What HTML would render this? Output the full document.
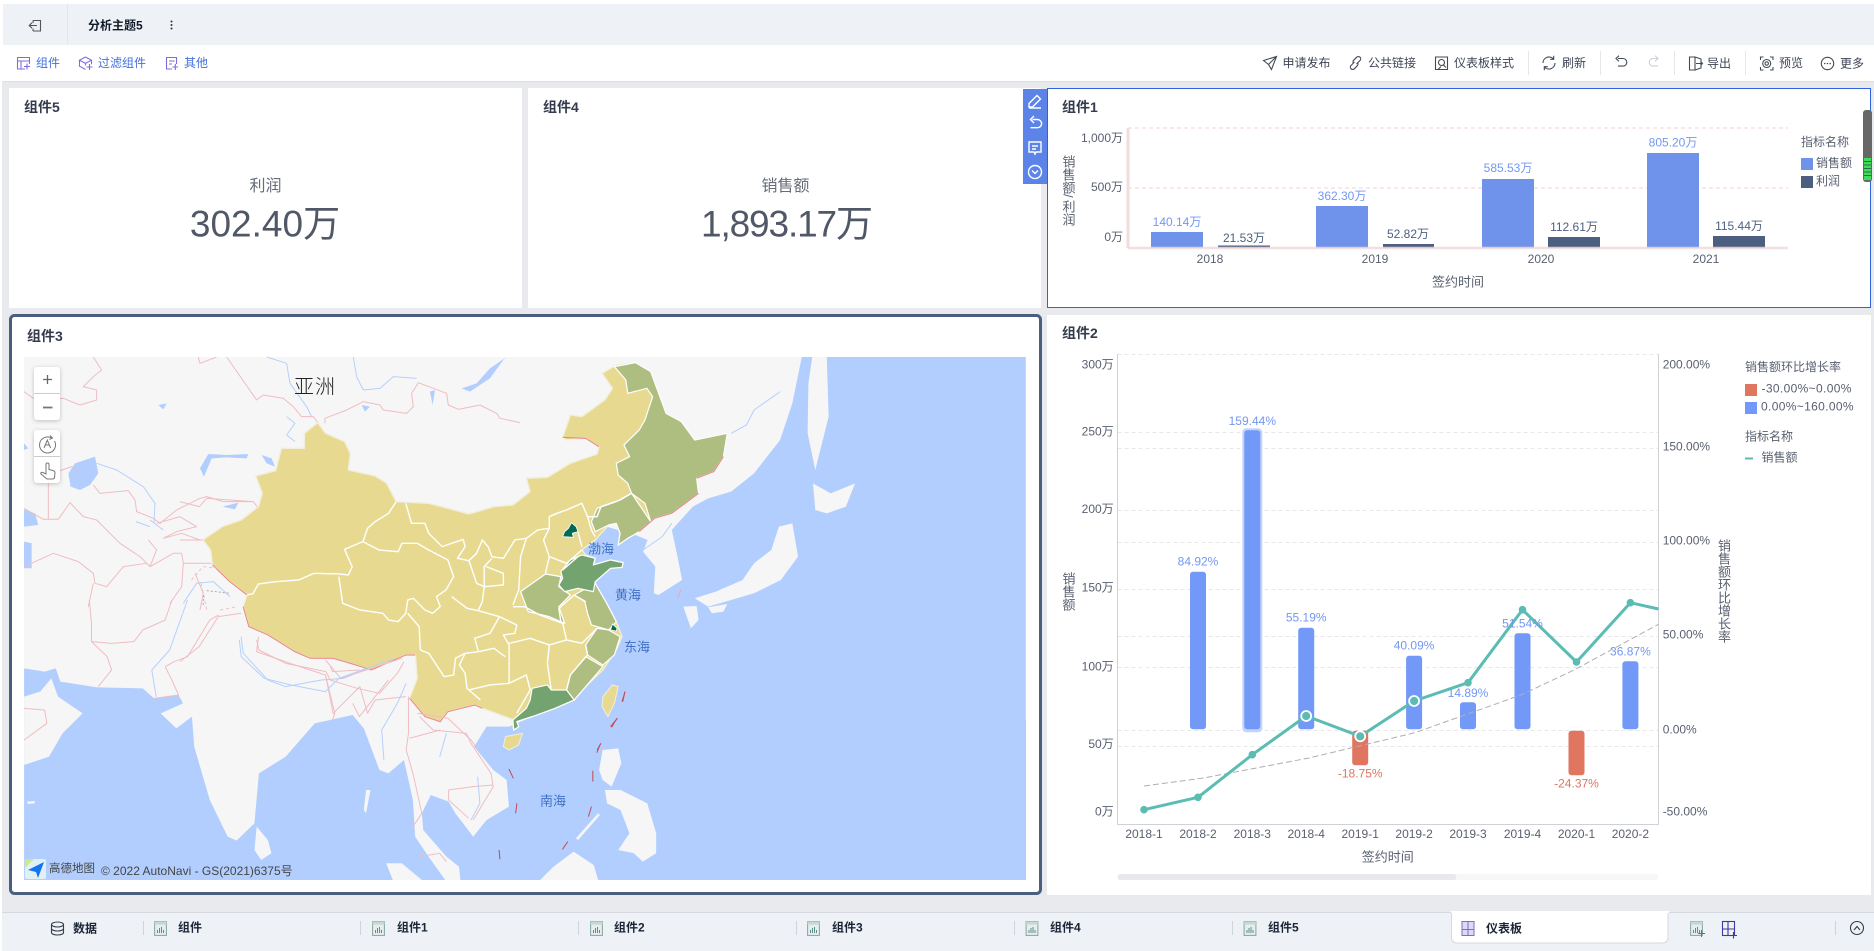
<!DOCTYPE html>
<html lang="zh">
<head>
<meta charset="utf-8">
<title>分析主题5</title>
<style>
html,body{margin:0;padding:0;width:1874px;height:951px;overflow:hidden;background:#fff}
svg{display:block;position:absolute;left:0;top:0}
text{font-family:"Liberation Sans","Noto Sans CJK SC",sans-serif;dominant-baseline:central}
.nss *{vector-effect:non-scaling-stroke}
.t{font-size:12px;fill:#3d4656}
.b{font-size:12px;font-weight:700;fill:#1b2536}
.h{font-size:14px;font-weight:700;fill:#333b4c}
.a{font-size:12px;fill:#596070}
.at{font-size:13px;fill:#596070}
.bl{font-size:12px;fill:#7397f2;text-anchor:middle}
.dk{font-size:12px;fill:#4d5f80;text-anchor:middle}
.rd{font-size:12px;fill:#e07560;text-anchor:middle}
.m{text-anchor:middle}
.e{text-anchor:end}
.tb{font-size:12px;fill:#4470dd}
.v{writing-mode:vertical-rl;text-orientation:upright;font-size:13px;fill:#596070}
.v2{writing-mode:vertical-rl;font-size:13px;fill:#596070}
.ic{fill:none;stroke:#444b58;stroke-width:1.1}
.lb{fill:none;stroke:#7b6fe0;stroke-width:1.1}
.sea{font-size:13px;fill:#3f70c6;text-anchor:middle}
.wht{fill:none;stroke:#fff;stroke-width:1.4;stroke-linejoin:round}
.pk{fill:none;stroke:#f0bcc1;stroke-width:1;stroke-linejoin:round}
.rv{fill:none;stroke:#b6d0fb;stroke-width:1;stroke-linejoin:round}
.ln{fill:#b1cefe}
.rb{fill:none;stroke:#e9838b;stroke-width:1}
.nd{fill:none;stroke:#c8494f;stroke-width:1}
</style>
</head>
<body>
<svg width="1874" height="951" viewBox="0 0 1874 951" xmlns="http://www.w3.org/2000/svg">
<defs>
<clipPath id="mc"><rect x="24" y="357" width="1002" height="523"/></clipPath>
<symbol id="ci" viewBox="0 0 13 15">
<rect x=".6" y=".6" width="11.8" height="13.8" fill="#e6eeed" stroke="#84a5a1"/>
<rect x=".6" y=".6" width="11.8" height="3" fill="#c5d8d5" stroke="none"/>
<path d="M3.5 12V9M5.5 12V7M7.5 12V6M9.5 12V9" stroke="#5d8f8a" fill="none"/>
</symbol>
</defs>

<!-- page background -->
<rect width="1874" height="951" fill="#fff"/>
<rect x="2" y="81" width="1872" height="832" fill="#e8eaee"/>
<rect x="3" y="4" width="1871" height="41" fill="#eef1f6"/>
<rect x="3" y="81" width="1871" height="1" fill="#dcdee3"/>
<rect x="67" y="4" width="1" height="41" fill="#e3e6ec"/>

<!-- tab bar -->
<g class="ic" style="stroke:#555">
<path d="M33 20.5h7.5v10.5h-7.5M33 20.5v2.5M33 28.5v2.5M37 25.5h-7.5M32 22.8l-2.8 2.7 2.8 2.7"/>
</g>
<text x="88" y="25.5" class="b" style="fill:#111a28">分析主题5</text>
<g fill="#333"><circle cx="171.5" cy="21.5" r="1"/><circle cx="171.5" cy="25" r="1"/><circle cx="171.5" cy="28.5" r="1"/></g>

<!-- left toolbar -->
<g class="lb">
<path d="M29.5 64V57.5H17.5V69H25M17.5 61H29.5M21 61V69M24 66.5h6M27 63.5v6"/>
<path d="M85.5 57l6 3.2v4M79.5 60.2v6l6 3.2M85.5 57l-6 3.2 6 3.2 6-3.2M85.5 63.4v2M86.5 67h6M89.5 64v6"/>
<path d="M176.5 64V57.5H166.5V69H172M169 61h5.5M169 64h3M172.5 67h5.5M175.3 64v6"/>
</g>
<text x="36" y="63" class="tb">组件</text>
<text x="98" y="63" class="tb">过滤组件</text>
<text x="184" y="63" class="tb">其他</text>

<!-- right toolbar -->
<g class="ic">
<path d="M1263.5 60.5L1276.5 56.5L1271.5 69.5L1268.5 64.5ZM1268.5 64.5L1276.5 56.5"/>
<path d="M1354.5 62l-3.5 3.5a2.3 2.3 0 0 0 3.3 3.3l3-3a2.3 2.3 0 0 0 0-3.3M1356.5 64l3.5-3.5a2.3 2.3 0 0 0-3.3-3.3l-3 3a2.3 2.3 0 0 0 0 3.3"/>
<path d="M1435.5 69.5V57h12v12.5zM1438 69.5l3-3M1441.5 59.5a3 3 0 1 1 0 6 3 3 0 0 1 0-6M1443.5 65l2.5 2.5"/>
<path d="M1543 63a6 6 0 0 1 10.5-4M1555 63a6 6 0 0 1-10.5 4M1553.7 55.8v3.5h-3.5M1544.3 70.2v-3.5h3.5"/>
<path d="M1618 58.5h5a3.8 3.8 0 0 1 0 7.6h-5M1619 55.7l-3 2.8 3 2.8"/>
<path d="M1658 58.5h-5a3.8 3.8 0 0 0 0 7.6h5M1655 55.7l3 2.8-3 2.8" style="stroke:#ccd1da"/>
<path d="M1695 57h-5.5v13h5.5M1695 57l6 2v9l-6 2zM1696 63.5h6.5M1700.5 61.5l2 2-2 2"/>
<path d="M1760.5 60v-3h3M1773 60v-3h-3M1760.5 67v3h3M1773 67v3h-3M1766.7 59.5a4 4 0 1 1 0 8 4 4 0 0 1 0-8M1766.7 61.8a1.7 1.7 0 1 1 0 3.4 1.7 1.7 0 0 1 0-3.4"/>
<circle cx="1827.5" cy="63.5" r="6.2"/>
</g>
<g fill="#444b58"><circle cx="1824.8" cy="63.5" r=".8"/><circle cx="1827.5" cy="63.5" r=".8"/><circle cx="1830.2" cy="63.5" r=".8"/></g>
<text x="1282.5" y="63" class="t">申请发布</text>
<text x="1368" y="63" class="t">公共链接</text>
<text x="1454" y="63" class="t">仪表板样式</text>
<text x="1562" y="63" class="t">刷新</text>
<text x="1707" y="63.5" class="t">导出</text>
<text x="1779" y="63" class="t">预览</text>
<text x="1840" y="63.5" class="t">更多</text>
<g fill="#e4e6eb"><rect x="1528" y="51" width="1" height="24"/><rect x="1600" y="51" width="1" height="24"/><rect x="1674" y="51" width="1" height="24"/><rect x="1745" y="51" width="1" height="24"/></g>

<!-- cards -->
<rect x="9" y="88" width="513" height="220" fill="#fff"/>
<rect x="528" y="88" width="513" height="220" fill="#fff"/>
<rect x="1047.5" y="88.5" width="823" height="219" fill="#fff" stroke="#2f62dc"/>
<rect x="10.5" y="315.5" width="1030" height="578" rx="4" fill="#fff" stroke="#4a5e80" stroke-width="3"/>
<rect x="1047" y="315" width="824" height="580" fill="#fff"/>

<text x="24" y="107" class="h">组件5</text>
<text x="543" y="107" class="h">组件4</text>
<text x="1062" y="107" class="h">组件1</text>
<text x="27" y="336" class="h">组件3</text>
<text x="1062" y="333" class="h">组件2</text>

<!-- KPI -->
<text x="265.500" y="186.500" class="m" style="font-size:16px;fill:#666c78">利润</text>
<text x="265" y="224" class="m" style="font-size:37px;fill:#505766">302.40万</text>
<text x="785.500" y="186.500" class="m" style="font-size:16px;fill:#666c78">销售额</text>
<text x="787" y="224" class="m" textLength="172" lengthAdjust="spacing" style="font-size:37px;fill:#505766">1,893.17万</text>

<!-- side tool -->
<rect x="1023" y="89" width="24" height="95" fill="#5b83e8"/>
<g fill="none" stroke="#fff" stroke-width="1.4">
<path d="M1029 103.5l8-8 3.5 3.5-8 8h-3.5zM1029 108h12"/>
<path d="M1032.5 119.5h5a4 4 0 0 1 0 8.2h-7M1034 116l-3.5 3.5 3.5 3.5"/>
<path d="M1029 142h12v10h-5l-1 2-1-2h-5zM1032 146h6M1032 149h4"/>
<circle cx="1035" cy="172" r="6.5"/><path d="M1032 170.5l3 3 3-3"/>
</g>

<!-- chart 1 -->
<g>
<path d="M1128 128H1788M1128 188H1788" stroke="#fbe7e6" stroke-width="2" stroke-dasharray="4 3" fill="none"/>
<path d="M1128 128V248" stroke="#f2dcdc" stroke-width="3" fill="none"/>
<g fill="#6f92ea">
<rect x="1151" y="232" width="52" height="16"/><rect x="1316" y="206" width="52" height="42"/><rect x="1482" y="179" width="52" height="69"/><rect x="1647" y="153" width="52" height="95"/>
</g>
<g fill="#4d5f80">
<rect x="1218" y="245.5" width="52" height="2.5"/><rect x="1383" y="244" width="51" height="4"/><rect x="1548" y="237" width="52" height="11"/><rect x="1713" y="236" width="52" height="12"/>
</g>
<path d="M1128 248H1788" stroke="#f1d9d9" stroke-width="2.5" fill="none" opacity=".85"/>
<g class="a">
<text x="1123" y="138" class="e">1,000万</text><text x="1123" y="187" class="e">500万</text><text x="1123" y="237" class="e">0万</text>
<text x="1210" y="259" class="m">2018</text><text x="1375" y="259" class="m">2019</text><text x="1541" y="259" class="m">2020</text><text x="1706" y="259" class="m">2021</text>
</g>
<text x="1177" y="222" class="bl">140.14万</text><text x="1342" y="196" class="bl">362.30万</text><text x="1508" y="168" class="bl">585.53万</text><text x="1673" y="142.5" class="bl">805.20万</text>
<text x="1244" y="238" class="dk">21.53万</text><text x="1408" y="234" class="dk">52.82万</text><text x="1574" y="227" class="dk">112.61万</text><text x="1739" y="226" class="dk">115.44万</text>
<text x="1458" y="282" class="at m">签约时间</text>
<text x="1068" y="155" class="v" style="dominant-baseline:auto">销售额</text>
<text x="1068" y="194" class="v2" style="dominant-baseline:auto">/</text>
<text x="1068" y="200" class="v" style="dominant-baseline:auto">利润</text>
<text x="1801" y="142" class="a">指标名称</text>
<rect x="1801" y="158" width="12" height="12" fill="#6f92ea"/><text x="1816" y="163" class="a">销售额</text>
<rect x="1801" y="176" width="12" height="12" fill="#4d5f80"/><text x="1816" y="181" class="a">利润</text>
</g>

<!-- floating widget -->
<rect x="1863" y="110" width="9" height="72" rx="3" fill="#676767"/>
<rect x="1864" y="158" width="7" height="22" fill="#3fdc5b"/>
<path d="M1864 161.5h7M1864 165h7M1864 168.5h7M1864 172h7M1864 175.5h7" stroke="#2f6b42" fill="none"/>

<!-- map -->
<g clip-path="url(#mc)">
<rect x="24" y="357" width="1002" height="523" fill="#f6f6f7"/>

<!-- seas / lakes, zoom3 coordinates -->
<g class="nss" transform="translate(0,310) scale(.3333)">
<path class="ln" d="M205 490L225 460L285 440L295 490L270 525L240 540L212 530Z"/>
<path class="ln" d="M72 598L105 610L115 645L72 650Z"/>
<path class="ln" d="M72 695L95 700L95 775L72 775Z"/>
<path class="ln" d="M72 400L85 415L72 420Z"/>
<path class="ln" d="M600 475L625 432L680 435L745 432L740 445L680 442L635 445L612 500Z"/>
<path class="ln" d="M1520 141L1470 175L1430 220L1385 235L1410 245L1470 205L1510 150Z"/>
<path class="ln" d="M1085 285L1110 290L1095 305Z"/>
<path class="ln" d="M668 590L715 578L705 598Z"/>
<path class="ln" d="M1290 245L1305 240L1298 285Z"/>
<path class="ln" d="M475 285L500 280L490 298Z"/>
<path class="ln" d="M785 435L815 445L825 470L800 460Z"/>
<path class="rv" d="M290 460L350 480L430 530L465 580L462 640M1060 141L1070 200L1090 240L1140 235L1180 200L1250 205M800 141L860 160L870 220L920 290L935 320M860 320L885 340L860 375L885 395M408 635L450 650M450 630L490 660M550 880L590 820L640 815L690 860"/>
<path class="pk" d="M680 141L770 270L790 255L850 265L880 290L905 320L940 320L955 340M975 340L975 325L1040 300L1090 275L1140 285L1150 300L1220 310L1240 290L1235 250L1255 218L1340 250L1345 285L1375 298L1440 285L1490 310L1500 325L1560 338M72 245L100 265L190 265L240 285L290 270L290 240L250 230L280 200L305 180L280 141M180 482L215 470L235 490M145 520V628M72 595L130 628L175 628L210 578L250 620L290 630L360 700L420 740L450 770L520 730L545 730L550 760L640 760M280 525L300 550L385 542L405 570L410 605L460 625L480 640L530 600L600 565L620 560L670 575L760 575L775 595M72 770L160 730L235 755L280 790L285 820L320 830L370 770L440 760M280 820L265 890M595 141L600 160L650 141M470 640L540 620L590 650L530 665L490 685L545 670L600 690M445 690L470 720L450 770M510 880L545 830L550 760M585 790L610 850L600 900"/>
</g>

<!-- seas zoom5 coords -->
<g class="nss" transform="translate(0,600) scale(.4464,.3333)">
<path class="ln" d="M54 205L100 215L125 205L135 245L218 262L320 265L345 295L400 285L410 310L360 340L395 385L430 350L435 440L470 600L510 710L530 722L570 670L580 520L640 470L705 370L790 345L815 385L850 510L870 520L905 480L925 600L930 710L960 770L1000 845L54 845Z"/>
<path class="ln" d="M1130 380L1090 380L1062 440L1105 510L1135 540L1140 620L1090 660L1060 710L1020 640L1005 605L965 585L945 640L948 690L1000 770L1028 800L1032 845L2300 845L2300 360Z"/>
</g>

<!-- Pacific zoom4 coords -->
<g class="nss" transform="translate(180,350) scale(.3827,.3333)">
<path class="ln" d="M1625 20L1600 160L1568 270L1500 370L1440 425L1380 445L1340 470L1285 540L1300 620L1312 690L1250 735L1238 730L1242 650L1210 605L1222 570L1190 555L1100 525L1040 600L1040 700L1080 720L1100 800L1100 950L1000 1060L860 1130L860 1210L2210 1210L2210 20Z"/>
<path fill="#f6f6f7" d="M1652 20L1690 20L1695 200L1660 360L1640 250L1642 100Z"/>
<path fill="#f6f6f7" d="M1654 400L1700 430L1764 400L1740 470L1690 490L1660 480Z"/>
<path fill="#f6f6f7" d="M1345 745L1400 725L1470 690L1500 640L1545 600L1565 530L1600 520L1615 620L1570 690L1500 730L1440 750L1380 770Z"/>
<path fill="#f6f6f7" d="M1315 770L1350 768L1355 810L1335 835Z"/>
<path fill="#f6f6f7" d="M1380 772L1430 762L1420 785L1390 790Z"/>
<path class="rv" d="M1568 125L1500 180L1480 225L1440 250M1210 600L1260 560L1285 520"/>
</g>

<!-- extra land zoom5 coords -->
<g class="nss" transform="translate(0,600) scale(.4464,.3333)">
<g fill="#f6f6f7">
<path d="M54 495L110 470L140 400L185 340L130 290L115 235L90 275L54 290Z"/>
<path d="M575 680L600 720L608 760L585 780L570 750Z"/>
<path d="M865 790L900 790L945 840L880 840Z"/>
<path d="M1210 840L1240 800L1285 755L1330 795L1340 840Z"/>
<path d="M1350 450L1385 445L1392 490L1370 560L1350 540L1342 510Z"/>
<path d="M1355 570L1390 570L1450 610L1470 700L1470 760L1440 785L1420 760L1385 750L1410 700L1390 630L1360 610Z"/>
<path d="M1290 715L1340 640L1344 645L1295 720Z"/>
<path d="M820 570L830 570L820 640L815 630Z"/>
<path d="M60 605L78 603L78 610L62 612Z"/>
</g>
<path class="rv" d="M540 110L545 160L600 240L640 260L720 240L770 235L860 185M420 0L380 150L340 210L350 290M910 250L890 310L855 390L860 480M1000 400L985 470M1070 530L1075 610L1055 660"/>
<path class="pk" d="M200 0L205 70L205 125L250 130L300 125L320 90L370 60L385 0M205 125L240 170L250 210L220 260M370 200L390 185L420 170L470 60L490 45M370 200L385 240L400 285L345 295M575 120L580 150L640 190L730 215L740 240L800 265L850 280L890 220L905 185M740 200L745 215L805 210M730 230L750 340L745 360M790 310L805 350L840 290L870 240M915 290L915 400L910 450L925 520L945 640L920 690M940 350L970 390L1045 400L1055 430L1100 520L1105 560L1060 660M1005 570L1060 560L1105 555M1005 570L1005 600L1050 655M940 770L985 760L1000 785M54 325L100 330M100 330L105 370L54 420"/>
<path class="nd" d="M1400 275L1395 305M1382 355L1370 382M1345 432L1337 458M1140 507L1150 535M1328 512V545M1325 620L1318 650M1158 610L1155 640M1272 725L1260 748M1118 750L1120 778"/>
</g>

<!-- China, zoom4 coords -->
<g class="nss" transform="translate(180,350) scale(.3827,.3333)">
<path fill="#e7da90" stroke="#f2eedb" stroke-width="1.4" d="M60 570L110 530L160 510L205 470L215 430L198 378L250 362L265 295L325 295L325 250L360 218L380 250L430 275L445 310L440 360L510 378L540 400L565 455L650 460L700 475L755 492L820 470L870 465L915 425L905 385L960 382L1020 340L1090 312L1095 290L1060 265L1010 270L1000 262L1020 195L1050 200L1110 150L1130 115L1103 70L1140 45L1190 38L1230 65L1270 190L1310 215L1345 270L1430 250L1420 320L1395 365L1350 385L1355 430L1320 460L1285 490L1240 505L1200 545L1170 565L1145 585L1150 550L1140 520L1120 525L1085 570L1050 600L1060 615L1085 625L1080 645L1125 630L1158 638L1155 652L1125 655L1085 695L1085 720L1115 760L1140 815L1155 860L1140 900L1105 960L1060 1010L1030 1050L980 1075L920 1100L880 1115L885 1130L872 1140L868 1108L790 1075L770 1065L700 1085L680 1115L640 1100L600 1045L620 985L615 915L590 915L560 930L500 960L460 945L400 925L340 925L300 905L230 855L180 830L165 770L175 735L130 695L85 645L80 600Z"/>
<path fill="#e7da90" stroke="#f2eedb" d="M1130 1005L1145 1010L1135 1060L1118 1100L1103 1070L1105 1040Z"/>
<path fill="#e7da90" stroke="#f2eedb" d="M850 1160L895 1150L885 1185L860 1200L845 1190Z"/>
<!-- green provinces -->
<g fill="#aebd80" stroke="#fff" stroke-width="1.2" stroke-linejoin="round">
<path d="M1135 50L1190 38L1230 65L1270 190L1310 215L1345 270L1430 250L1420 320L1395 365L1350 385L1355 430L1320 460L1285 490L1240 505L1230 515L1215 460L1180 430L1170 400L1145 375L1140 340L1175 320L1160 285L1200 240L1215 210L1235 140L1220 115L1170 130L1165 90Z"/>
<path d="M1180 430L1230 515L1200 545L1170 565L1145 585L1150 550L1140 520L1120 525L1085 545L1075 515L1090 475L1140 455Z"/>
<path d="M890 725L955 672L995 680L990 710L1020 735L990 770L1005 820L965 800L910 785Z"/>
<path d="M1030 735L1085 700L1115 760L1140 815L1120 840L1075 825L1065 790L1058 755Z"/>
<path d="M1090 835L1120 840L1150 860L1135 915L1105 945L1065 915L1060 885Z"/>
<path d="M1060 920L1105 950L1060 1010L1030 1050L1010 1020L1020 975Z"/>
</g>
<g fill="#73a470" stroke="#fff" stroke-width="1.2" stroke-linejoin="round">
<path d="M1050 615L1085 625L1080 645L1125 630L1158 638L1155 652L1125 655L1085 695L1080 725L1040 715L1005 725L990 705L1000 685L995 665L1020 630Z"/>
<path d="M920 1015L960 1005L970 1020L1010 1020L1030 1050L980 1075L920 1100L880 1115L885 1130L872 1140L870 1110L905 1075L915 1050Z"/>
</g>
<g fill="#006a54" stroke="#fff" stroke-width=".8">
<path d="M1000 560L1005 545L1015 535L1023 518L1035 530L1040 545L1025 550L1028 562Z"/>
<path d="M1125 840L1130 822L1142 835L1140 843Z"/>
</g>
<!-- province lines -->
<path class="wht" d="M565 455L545 490L510 515L490 535L478 575L430 598L440 625L450 650L440 675L415 672L350 670L310 690L250 695L205 702L190 732L172 735"/>
<path class="wht" d="M590 460L605 520L640 520L650 550L685 590L740 568L745 590L725 625L755 632L775 610L790 570L805 590L815 620L845 625L875 570L905 565L935 540L965 535L965 500L985 490L1010 480L1050 460L1065 500L1090 500L1100 470L1150 450L1180 430"/>
<path class="wht" d="M478 575L520 600L570 605L580 580L620 580L650 600L700 630L715 680L695 720L670 740L680 770L660 790L640 780L610 745L595 750L590 790L570 815L545 810L530 790L470 780L425 760L415 680"/>
<path class="wht" d="M595 790L625 830L628 900M755 632L775 700L795 710L795 650L815 625M800 650L845 670L845 705L795 710L790 755L780 780M905 565L890 620L885 720L870 765M965 535L950 570L965 620L955 670M710 740L750 775L780 782L835 800L880 825L875 850L845 855L860 885M835 800L810 850L770 865L780 905L745 910L730 945L745 970L750 1015L785 1050M628 900L650 910L690 980L715 975L720 925L745 910M755 1020L810 1005L860 1000L905 975L915 1020L880 1090M860 885L860 950L860 1000M780 905L820 895L850 920M860 880L915 865L965 885L960 940L970 1020M870 770L900 770L940 795L1000 820L1010 870L965 885M1010 870L1050 880L1090 835M1060 885L1065 915L1020 975L1010 1020M1060 755L1030 735L990 775L995 815M965 500L985 490M1065 500L1075 540L1085 560M1000 660L1040 620M965 620L1010 640L1050 600M1040 545L1050 590"/>
<!-- red border segments -->
<path class="rb" d="M1000 262L1060 265L1095 290M1420 320L1395 365L1350 385M1355 430L1320 460L1285 490L1240 505L1200 545M175 735L130 695L85 645M165 770L180 830L230 855L300 905L340 925L400 925L460 945L500 960L560 930L590 915L615 915M600 1045L640 1100L680 1115L700 1085L770 1065L790 1075"/>
<path class="nd" d="M1163 1025L1155 1055M1143 1105L1125 1130M1100 1180L1090 1200"/>
<path d="M1300 745L1310 718" fill="none" stroke="#e9a8ae"/>
<path class="pk" d="M60 570L0 570M0 455L50 470L70 445L130 450L190 455M0 935L50 890L100 800L160 790M205 860L200 905L300 945L380 975L390 1030L400 1090L470 1010L490 1090L510 1050L590 1040M380 930L420 985L580 925M620 1090L700 1105L760 1170L780 1200M600 1165L680 1140"/>
<path class="pk" stroke-dasharray="3 3" d="M30 690L60 650L100 655M55 700L70 780M105 780L150 770"/>
<path d="M62 735L60 770M70 722L130 730" fill="none" stroke="#aaa" stroke-dasharray="2 2"/>
<path class="rv" d="M155 870L160 920L220 985L290 1005L380 1025L415 985L560 925"/>
</g>

<!-- map labels -->
<text x="315" y="387.5" class="m" style="font-size:20px;fill:#222;letter-spacing:1px;font-weight:300">亚洲</text>
<text x="601" y="549" class="sea">渤海</text>
<text x="628" y="595" class="sea">黄海</text>
<text x="637" y="647" class="sea">东海</text>
<text x="553" y="801" class="sea">南海</text>

<!-- map controls -->
<g style="filter:drop-shadow(0 1px 2px rgba(0,0,0,.22))" fill="#fff">
<rect x="34" y="367" width="26" height="53" rx="3"/>
<rect x="34" y="430" width="26" height="53" rx="3"/>
</g>
<rect x="34" y="393" width="26" height="1" fill="#ccc"/><rect x="34" y="456" width="26" height="1" fill="#ccc"/>
<path d="M43 379.5h9M47.5 375v9" stroke="#666" stroke-width="1.3" fill="none"/>
<path d="M43 407.5h9.5" stroke="#777" stroke-width="1.8" fill="none"/>
<g fill="none" stroke="#777" stroke-width="1">
<path d="M54.5 441a8 8 0 1 1-3-3M50 435.5l2.5 2.5-3 1.5"/>
<path d="M44 448l3.3-8 3.3 8M45 445h4.6"/>
<path d="M46 474v-9.5a1.5 1.5 0 0 1 3 0v5l4 1c1.500.5 2 1.200 2 2.500l-.5 4.500c-.2 1-1 1.500-2 1.500H47l-6-5c-.8-1 .5-2.300 1.800-1.500z"/>
</g>

<!-- amap logo -->
<rect x="25" y="859" width="21" height="20" rx="2" fill="#dff1f5"/>
<path d="M25 859h9l-9 9z" fill="#c8ec8a"/>
<path d="M44 862L28 870L36 872L38 878Z" fill="#1673ef"/>
<text x="49" y="869" style="font-size:11.5px;fill:#444">高德地图</text>
<text x="101" y="871" style="font-size:12px;fill:#454545">© 2022 AutoNavi - GS(2021)6375号</text>
</g>

<!-- chart 2 -->
<g>
<path d="M1117.5 354.5H1658.5M1117.5 432.5H1658.5M1117.5 448.5H1658.5M1117.5 510.500H1658.5M1117.5 542.5H1658.5M1117.5 589.5H1658.5M1117.5 636.5H1658.5M1117.5 667.5H1658.5M1117.5 730.5H1658.5M1117.5 746.5H1658.5" stroke="#e8e8ea" stroke-dasharray="4 3" fill="none"/>
<path d="M1117.5 354V824.5H1658.5V354" stroke="#cfd1d6" fill="none"/>
<g fill="#7299f7">
<rect x="1190" y="571.7" width="16" height="157.6" rx="3"/>
<rect x="1298.2" y="627.7" width="16" height="101.6" rx="3"/>
<rect x="1406.1" y="655.7" width="16" height="73.6" rx="3"/>
<rect x="1460" y="702.3" width="16" height="27" rx="3"/>
<rect x="1514.5" y="633.3" width="16" height="96" rx="3"/>
<rect x="1622.4" y="661.3" width="16" height="68" rx="3"/>
</g>
<rect x="1242.3" y="428.3" width="20" height="304" rx="4" fill="#c3d3fb"/>
<rect x="1244.3" y="430.3" width="16" height="299" rx="3" fill="#7299f7"/>
<rect x="1352.2" y="730.7" width="16" height="34.6" rx="3" fill="#e07560"/>
<rect x="1568.5" y="730.7" width="16" height="44.6" rx="3" fill="#e07560"/>
<path d="M1144 786L1203.6 778L1309 758L1415 732.7L1521 695L1574 670L1658.5 624.3" fill="none" stroke="#aeaeb2" stroke-dasharray="6 3"/>
<path d="M1144 809.7L1198 797.3L1252.3 754.7L1306.2 716L1360.2 736.3L1414.1 701L1468 682.7L1522.5 609.7L1576.5 662L1630.4 602.7L1658.5 609" fill="none" stroke="#5bbcb3" stroke-width="3" stroke-linejoin="round"/>
<g fill="#5bbcb3">
<circle cx="1144" cy="809.7" r="3.8"/><circle cx="1198" cy="797.3" r="3.8"/><circle cx="1252.3" cy="754.7" r="3.8"/>
<circle cx="1306.2" cy="716" r="5" stroke="#fff" stroke-width="1.800"/><circle cx="1360.2" cy="736.3" r="5" stroke="#fff" stroke-width="1.800"/><circle cx="1414.1" cy="701" r="5" stroke="#fff" stroke-width="1.800"/>
<circle cx="1468" cy="682.7" r="3.8"/><circle cx="1522.5" cy="609.7" r="3.8"/><circle cx="1576.5" cy="662" r="3.8"/><circle cx="1630.4" cy="602.7" r="3.8"/>
</g>
<text x="1198" y="561.7" class="bl">84.92%</text><text x="1252.3" y="421" class="bl">159.44%</text><text x="1306.2" y="617.7" class="bl">55.19%</text><text x="1414.1" y="645.7" class="bl">40.09%</text><text x="1468" y="693" class="bl">14.89%</text><text x="1522.5" y="623.7" class="bl">51.54%</text><text x="1630.4" y="651.7" class="bl">36.87%</text>
<text x="1360.2" y="773.7" class="rd">-18.75%</text><text x="1576.5" y="783.7" class="rd">-24.37%</text>
<g class="a">
<text x="1113.7" y="364.7" class="e">300万</text><text x="1113.7" y="431.7" class="e">250万</text><text x="1113.7" y="509" class="e">200万</text><text x="1113.7" y="587.7" class="e">150万</text><text x="1113.7" y="666.7" class="e">100万</text><text x="1113.7" y="744" class="e">50万</text><text x="1113.7" y="811.7" class="e">0万</text>
<text x="1662.7" y="364.7">200.00%</text><text x="1662.7" y="446.7">150.00%</text><text x="1662.7" y="540.7">100.00%</text><text x="1662.7" y="634.7">50.00%</text><text x="1662.7" y="729.7">0.00%</text><text x="1662.7" y="811.7">-50.00%</text>
<text x="1144" y="834" class="m">2018-1</text><text x="1198" y="834" class="m">2018-2</text><text x="1252.3" y="834" class="m">2018-3</text><text x="1306.2" y="834" class="m">2018-4</text><text x="1360.2" y="834" class="m">2019-1</text><text x="1414.1" y="834" class="m">2019-2</text><text x="1468" y="834" class="m">2019-3</text><text x="1522.5" y="834" class="m">2019-4</text><text x="1576.5" y="834" class="m">2020-1</text><text x="1630.4" y="834" class="m">2020-2</text>
</g>
<text x="1387.7" y="857" class="at m">签约时间</text>
<rect x="1117.5" y="874" width="541" height="6" rx="3" fill="#f6f7f9"/>
<rect x="1117.5" y="874" width="339" height="6" rx="3" fill="#e8e9ee"/>
<text x="1068" y="572" class="v" style="dominant-baseline:auto">销售额</text>
<text x="1723.5" y="539" class="v" style="dominant-baseline:auto">销售额环比增长率</text>
<text x="1745" y="367" class="a">销售额环比增长率</text>
<rect x="1745" y="384" width="12" height="12" fill="#e07560"/><text x="1761.5" y="388.7" class="a" style="letter-spacing:.35px">-30.00%~0.00%</text>
<rect x="1745" y="402" width="12" height="12" fill="#7299f7"/><text x="1761" y="406.7" class="a" style="letter-spacing:.35px">0.00%~160.00%</text>
<text x="1745" y="436.7" class="a">指标名称</text>
<rect x="1745" y="457.5" width="8" height="2" fill="#5bbcb3"/><text x="1761.5" y="457.7" class="a">销售额</text>
</g>

<!-- bottom bar -->
<rect x="2" y="913" width="1872" height="38" fill="#eef1f6"/>
<rect x="2" y="912" width="1872" height="1" fill="#d5d8de"/>
<g fill="#cfd3da">
<rect x="143" y="921" width="1" height="14"/><rect x="360" y="921" width="1" height="14"/><rect x="578" y="921" width="1" height="14"/><rect x="796" y="921" width="1" height="14"/><rect x="1014" y="921" width="1" height="14"/><rect x="1232" y="921" width="1" height="14"/><rect x="1835" y="921" width="1" height="14"/>
</g>
<g fill="none" stroke="#333c4a" stroke-width="1.1">
<ellipse cx="57.5" cy="924.5" rx="6" ry="2.5"/>
<path d="M51.5 924.5v8c0 1.5 2.7 2.5 6 2.5s6-1 6-2.5v-8M51.5 928.5c0 1.5 2.7 2.5 6 2.5s6-1 6-2.5"/>
</g>
<text x="73" y="928.5" class="b">数据</text>
<use href="#ci" x="154" y="921" width="13" height="15"/><text x="178" y="927.5" class="b">组件</text>
<use href="#ci" x="372" y="921" width="13" height="15"/><text x="397" y="927.5" class="b">组件1</text>
<use href="#ci" x="590" y="921" width="13" height="15"/><text x="614" y="927.5" class="b">组件2</text>
<use href="#ci" x="807" y="921" width="13" height="15"/><text x="832" y="927.5" class="b">组件3</text>
<use href="#ci" x="1025.5" y="921" width="13" height="15"/><text x="1050" y="927.5" class="b">组件4</text>
<use href="#ci" x="1243.5" y="921" width="13" height="15"/><text x="1268" y="927.5" class="b">组件5</text>
<path d="M1451.5 912H1668V938a5 5 0 0 1-5 5H1456.5a5 5 0 0 1-5-5Z" fill="#fff" stroke="#d5d8de"/>
<rect x="1451" y="911" width="218" height="2" fill="#fff"/>
<g fill="#ded9f5" stroke="#7b6fc8" stroke-width="1"><rect x="1462" y="921.5" width="12" height="14"/><path d="M1462 929.5h12M1468 921.5v14" fill="none"/></g>
<text x="1486" y="928.5" class="b">仪表板</text>
<use href="#ci" x="1690" y="921" width="13" height="15"/><path d="M1701.5 930v7M1698 933.5h7" stroke="#4a7f79" fill="none"/>
<g fill="none" stroke="#3e3a9a" stroke-width="1.1"><rect x="1722.5" y="921.5" width="12" height="14"/><path d="M1722.5 929h12M1728 921.5v14M1733.5 932v6.5M1730.5 935.5h6.5"/></g>
<g fill="none" stroke="#333c4a" stroke-width="1.1"><circle cx="1857" cy="928" r="6.5"/><path d="M1854 930l3-3.5 3 3.5"/></g>
</svg>
</body>
</html>
